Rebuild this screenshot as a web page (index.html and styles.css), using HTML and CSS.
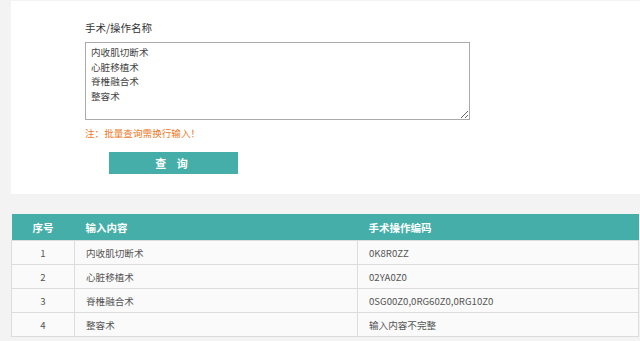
FILE: index.html
```html
<!DOCTYPE html>
<html lang="zh">
<head>
<meta charset="utf-8">
<title>手术/操作编码批量查询</title>
<link rel="stylesheet" href="styles.css">
</head>
<body>
<div class="panel">
  <div class="label">手术/操作名称</div>
  <textarea class="names" spellcheck="false">内收肌切断术
心脏移植术
脊椎融合术
整容术</textarea>
  <div class="note">注：批量查询需换行输入！</div>
  <button class="btn" type="button">查 询</button>
</div>
<table class="result">
  <thead>
    <tr><th class="c1">序号</th><th class="c2">输入内容</th><th class="c3">手术操作编码</th></tr>
  </thead>
  <tbody>
    <tr><td class="c1">1</td><td>内收肌切断术</td><td>0K8R0ZZ</td></tr>
    <tr><td class="c1">2</td><td>心脏移植术</td><td>02YA0Z0</td></tr>
    <tr><td class="c1">3</td><td>脊椎融合术</td><td>0SG00Z0,0RG60Z0,0RG10Z0</td></tr>
    <tr><td class="c1">4</td><td>整容术</td><td>输入内容不完整</td></tr>
  </tbody>
</table>
</body>
</html>
```
FILE: styles.css
```css
html, body {
  margin: 0;
  padding: 0;
  background: #f3f3f3;
  font-family: "Noto Sans CJK SC", "Noto Sans", sans-serif;
  overflow: hidden;
}
.panel {
  margin: 1px 0 0 11px;
  height: 193px;
  background: #fff;
  box-sizing: border-box;
  padding: 19px 0 0 74px;
  display: flex;
  flex-direction: column;
  align-items: flex-start;
}
.label {
  font-size: 10.5px;
  line-height: 16px;
  color: #333;
}
.names {
  margin-top: 6px;
  width: 385px;
  height: 78px;
  box-sizing: border-box;
  border: 1px solid #aaa;
  padding: 2px 5px;
  font-family: "Noto Sans CJK SC", sans-serif;
  font-size: 9.6px;
  line-height: 14.5px;
  color: #444;
  resize: vertical;
  outline: none;
}
.note {
  margin-top: 6px;
  font-size: 9.6px;
  line-height: 14px;
  color: #ec7a26;
}
.btn {
  margin: 12px 0 0 24px;
  width: 129px;
  height: 22px;
  border: none;
  background: #45aea8;
  color: #fff;
  font-family: "Noto Sans CJK SC", sans-serif;
  font-size: 11px;
  font-weight: bold;
  letter-spacing: 4px;
  padding: 0;
}
.result {
  margin: 20px 0 0 11px;
  width: 628px;
  border-collapse: collapse;
  table-layout: fixed;
  font-size: 9.6px;
  color: #555;
}
.result th {
  background: #45aea8;
  color: #fff;
  font-weight: bold;
  font-size: 10.5px;
  height: 26px;
  padding: 0 11px;
  text-align: left;
  border: none;
}
.result td {
  height: 23px;
  padding: 0 11px;
  border: 1px solid #dcdcdc;
  background: #fafafa;
}
.result .c1 { width: 41px; text-align: center; }
.result .c2 { width: 261px; }
```
